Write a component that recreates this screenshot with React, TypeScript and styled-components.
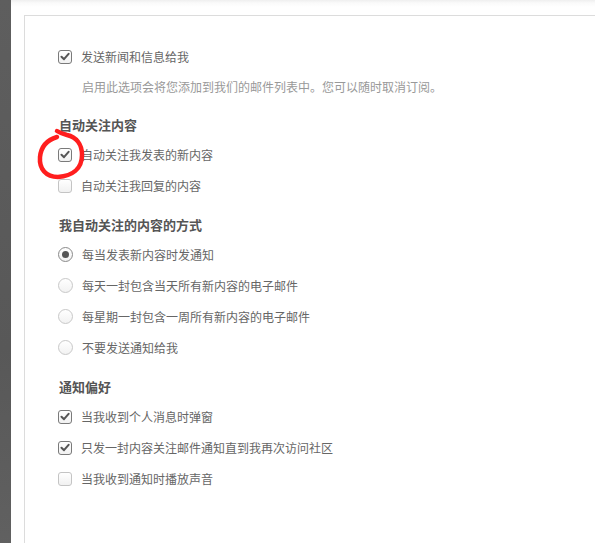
import React from 'react';
import styled, { createGlobalStyle } from 'styled-components';

const GlobalStyle = createGlobalStyle`
  html, body {
    margin: 0;
    padding: 0;
    background: #ffffff;
    font-family: "Noto Sans CJK SC", "Noto Sans", sans-serif;
  }
`;

const Page = styled.div`
  display: flex;
  min-height: 100vh;
  position: relative;
  overflow: hidden;
`;

const SideStrip = styled.div`
  width: 11px;
  flex-shrink: 0;
  background: linear-gradient(180deg, #5e5e5e 0%, #585858 60%, #626262 100%);
`;

const Main = styled.main`
  flex: 1;
  padding: 15px 0 0 13px;
  background: linear-gradient(180deg, #efefef 0px, #fafafa 3px, #ffffff 7px);
`;

const Card = styled.section`
  min-height: 540px;
  border: 1px solid #dcdcdc;
  border-right: none;
  border-bottom: none;
  background: #ffffff;
  padding: 25px 0 0 33px;
`;

const Row = styled.label`
  display: flex;
  align-items: center;
  height: 31px;
  gap: 9px;
  font-size: 12px;
  color: #666666;
`;

const Hint = styled.p`
  margin: 0 0 0 24px;
  height: 30px;
  line-height: 30px;
  font-size: 12px;
  color: #999999;
`;

const Heading = styled.h3<{ $gap: number }>`
  margin: ${p => p.$gap}px 0 0 1px;
  height: 29px;
  line-height: 29px;
  font-size: 13px;
  font-weight: bold;
  color: #555555;
`;

const Box = styled.span<{ $on: boolean }>`
  width: 14px;
  height: 14px;
  box-sizing: border-box;
  flex-shrink: 0;
  border: 1px solid ${p => (p.$on ? '#7a7a7a' : '#c4c4c4')};
  border-radius: 3px;
  background: linear-gradient(180deg, #ffffff 0%, #f1f1f1 100%);
  display: flex;
  align-items: center;
  justify-content: center;
`;

const Radio = styled.span<{ $on: boolean }>`
  width: 15px;
  height: 15px;
  box-sizing: border-box;
  flex-shrink: 0;
  border: 1px solid ${p => (p.$on ? '#8a8a8a' : '#c8c8c8')};
  border-radius: 50%;
  background: linear-gradient(180deg, #ffffff 0%, #f2f2f2 100%);
  display: flex;
  align-items: center;
  justify-content: center;

  &::after {
    content: '';
    display: ${p => (p.$on ? 'block' : 'none')};
    width: 7px;
    height: 7px;
    border-radius: 50%;
    background: #555555;
  }
`;

const Annotation = styled.svg`
  position: absolute;
  left: 0;
  top: 0;
  pointer-events: none;
`;

const Check = ({ on, label }: { on: boolean; label: string }) => (
  <Row>
    <Box $on={on}>
      {on && (
        <svg width="10" height="9" viewBox="0 0 10 9">
          <path d="M1.5 4.8 L4 7.2 L8.6 1.8" fill="none" stroke="#555" strokeWidth="2" strokeLinecap="round" strokeLinejoin="round" />
        </svg>
      )}
    </Box>
    {label}
  </Row>
);

const Option = ({ on, label }: { on: boolean; label: string }) => (
  <Row>
    <Radio $on={on} />
    {label}
  </Row>
);

export default function App() {
  const frequency = [
    '每当发表新内容时发通知',
    '每天一封包含当天所有新内容的电子邮件',
    '每星期一封包含一周所有新内容的电子邮件',
    '不要发送通知给我',
  ];

  return (
    <>
      <GlobalStyle />
      <Page>
        <SideStrip />
        <Main>
          <Card>
            <Check on label="发送新闻和信息给我" />
            <Hint>启用此选项会将您添加到我们的邮件列表中。您可以随时取消订阅。</Hint>

            <Heading $gap={8}>自动关注内容</Heading>
            <Check on label="自动关注我发表的新内容" />
            <Check on={false} label="自动关注我回复的内容" />

            <Heading $gap={9}>我自动关注的内容的方式</Heading>
            {frequency.map((f, i) => (
              <Option key={f} on={i === 0} label={f} />
            ))}

            <Heading $gap={9}>通知偏好</Heading>
            <Check on label="当我收到个人消息时弹窗" />
            <Check on label="只发一封内容关注邮件通知直到我再次访问社区" />
            <Check on={false} label="当我收到通知时播放声音" />
          </Card>
        </Main>
        <Annotation width="100" height="200">
          <path
            d="M57 131 C 60 133, 63 134, 67 135 C 76 137, 82 144, 82 155 C 82 169, 72 176, 58 177 C 46 177, 39 169, 40 157 C 41 147, 47 140, 57 137"
            fill="none"
            stroke="#ff1e1e"
            strokeWidth="4.5"
            strokeLinecap="round"
          />
        </Annotation>
      </Page>
    </>
  );
}
